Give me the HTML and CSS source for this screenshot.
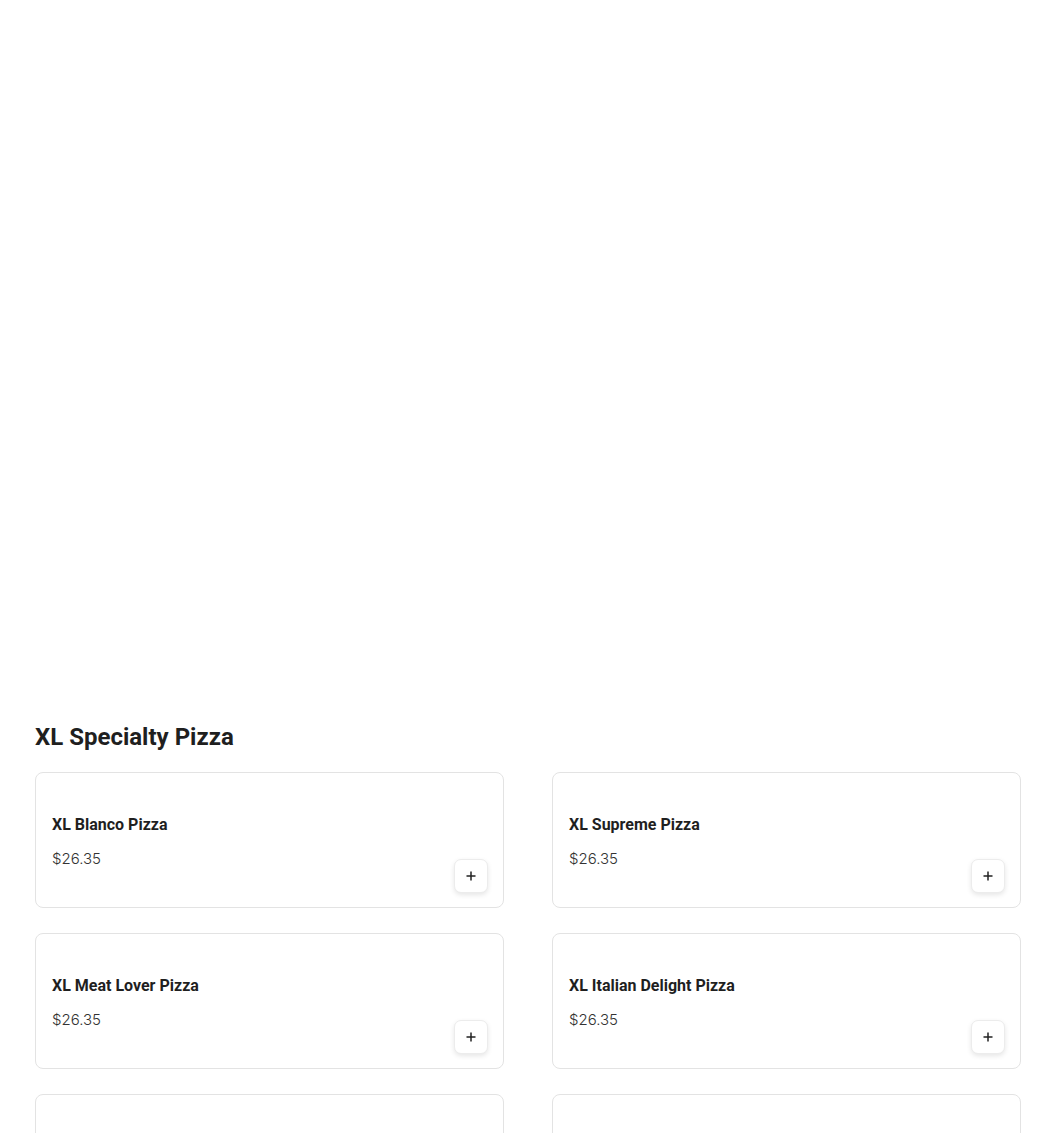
FILE: index.html
```html
<!DOCTYPE html>
<html>
<head>
<meta charset="utf-8">
<link rel="stylesheet" href="styles.css">
</head>
<body>
<div class="page">
  <div class="hero"></div>
  <section class="category">
    <h2 class="cat-title">XL Specialty Pizza</h2>
    <div class="grid">
      <div class="card">
        <div class="info">
          <div class="name">XL Blanco Pizza</div>
          <div class="price">$26.35</div>
        </div>
        <button class="add"><svg width="12" height="12" viewBox="0 0 12 12"><path d="M6 1.5v9M1.5 6h9" stroke="#222" stroke-width="1.5"/></svg></button>
      </div>
      <div class="card">
        <div class="info">
          <div class="name">XL Supreme Pizza</div>
          <div class="price">$26.35</div>
        </div>
        <button class="add"><svg width="12" height="12" viewBox="0 0 12 12"><path d="M6 1.5v9M1.5 6h9" stroke="#222" stroke-width="1.5"/></svg></button>
      </div>
      <div class="card">
        <div class="info">
          <div class="name">XL Meat Lover Pizza</div>
          <div class="price">$26.35</div>
        </div>
        <button class="add"><svg width="12" height="12" viewBox="0 0 12 12"><path d="M6 1.5v9M1.5 6h9" stroke="#222" stroke-width="1.5"/></svg></button>
      </div>
      <div class="card">
        <div class="info">
          <div class="name">XL Italian Delight Pizza</div>
          <div class="price">$26.35</div>
        </div>
        <button class="add"><svg width="12" height="12" viewBox="0 0 12 12"><path d="M6 1.5v9M1.5 6h9" stroke="#222" stroke-width="1.5"/></svg></button>
      </div>
      <div class="card">
        <div class="info">
          <div class="name"></div>
          <div class="price"></div>
        </div>
      </div>
      <div class="card">
        <div class="info">
          <div class="name"></div>
          <div class="price"></div>
        </div>
      </div>
    </div>
  </section>
</div>
</body>
</html>
```
FILE: styles.css
```css
html, body {
  margin: 0;
  padding: 0;
  background: #fff;
}
body {
  font-family: Roboto, "Liberation Sans", sans-serif;
  color: #1f1f1f;
}
.page {
  padding: 0 29px 0 35px;
}
.hero {
  height: 720px;
}
.cat-title {
  margin: 0;
  font-size: 24px;
  line-height: 36px;
  font-weight: 700;
  color: #1f1f1f;
  position: relative;
  top: -1px;
}
.grid {
  margin-top: 16px;
  display: grid;
  grid-template-columns: 469px 469px;
  column-gap: 48px;
  row-gap: 25px;
}
.card {
  box-sizing: border-box;
  height: 136px;
  border: 1px solid #e3e3e3;
  border-radius: 8px;
  padding: 0 16px 14px 16px;
  display: flex;
  justify-content: space-between;
  align-items: flex-end;
}
.info {
  padding-bottom: 24px;
}
.name {
  font-size: 16px;
  line-height: 20px;
  font-weight: 700;
  color: #1f1f1f;
}
.price {
  margin-top: 14px;
  font-family: Inter, "Open Sans", sans-serif;
  font-size: 15px;
  font-weight: 300;
  line-height: 20px;
  color: #333;
}
.add {
  width: 34px;
  height: 34px;
  border: 1px solid #ececec;
  border-radius: 7px;
  background: #fff;
  box-shadow: 0 2px 5px rgba(0,0,0,0.10);
  display: flex;
  align-items: center;
  justify-content: center;
  padding: 0;
  margin-right: -1px;
}
```
